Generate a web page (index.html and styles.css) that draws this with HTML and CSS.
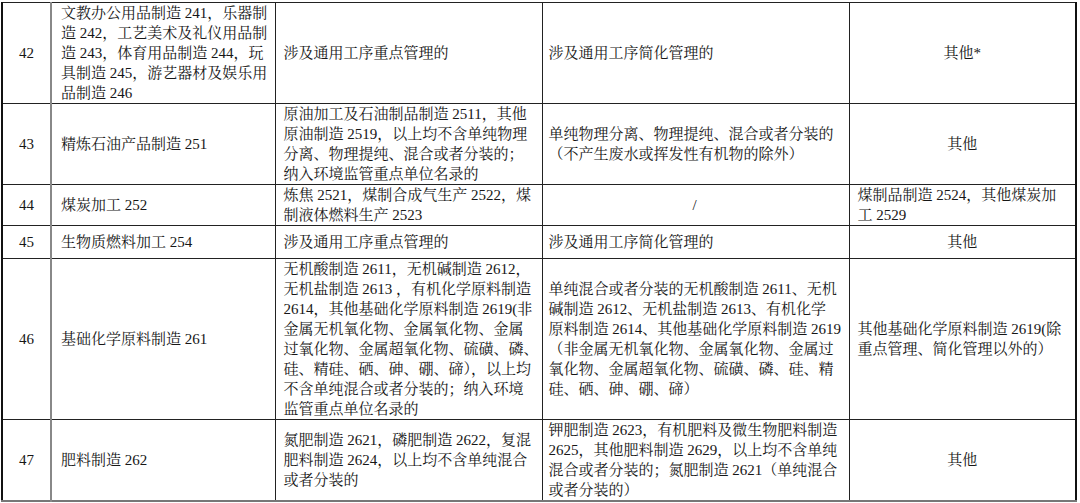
FILE: index.html
```html
<!DOCTYPE html>
<html lang="zh-CN">
<head>
<meta charset="utf-8">
<link rel="stylesheet" href="styles.css">
</head>
<body>
<table class="sheet">
  <colgroup>
    <col class="c-num">
    <col class="c-name">
    <col class="c-key">
    <col class="c-simple">
    <col class="c-other">
  </colgroup>
  <tbody>
    <tr class="r42">
      <td class="num">42</td>
      <td class="name">文教办公用品制造 241，乐器制<br>造 242，工艺美术及礼仪用品制<br>造 243，体育用品制造 244，玩<br>具制造 245，游艺器材及娱乐用<br>品制造 246</td>
      <td class="key">涉及通用工序重点管理的</td>
      <td class="simple">涉及通用工序简化管理的</td>
      <td class="other center">其他*</td>
    </tr>
    <tr class="r43">
      <td class="num">43</td>
      <td class="name">精炼石油产品制造 251</td>
      <td class="key">原油加工及石油制品制造 2511，其他<br>原油制造 2519，以上均不含单纯物理<br>分离、物理提纯、混合或者分装的；<br>纳入环境监管重点单位名录的</td>
      <td class="simple">单纯物理分离、物理提纯、混合或者分装的<br>（不产生废水或挥发性有机物的除外）</td>
      <td class="other center">其他</td>
    </tr>
    <tr class="r44">
      <td class="num">44</td>
      <td class="name">煤炭加工 252</td>
      <td class="key">炼焦 2521，煤制合成气生产 2522，煤<br>制液体燃料生产 2523</td>
      <td class="simple center">/</td>
      <td class="other">煤制品制造 2524，其他煤炭加<br>工 2529</td>
    </tr>
    <tr class="r45">
      <td class="num">45</td>
      <td class="name">生物质燃料加工 254</td>
      <td class="key">涉及通用工序重点管理的</td>
      <td class="simple">涉及通用工序简化管理的</td>
      <td class="other center">其他</td>
    </tr>
    <tr class="r46">
      <td class="num">46</td>
      <td class="name">基础化学原料制造 261</td>
      <td class="key">无机酸制造 2611，无机碱制造 2612，<br>无机盐制造 2613 ，有机化学原料制造<br>2614，其他基础化学原料制造 2619(非<br>金属无机氧化物、金属氧化物、金属<br>过氧化物、金属超氧化物、硫磺、磷、<br>硅、精硅、硒、砷、硼、碲），以上均<br>不含单纯混合或者分装的；纳入环境<br>监管重点单位名录的</td>
      <td class="simple">单纯混合或者分装的无机酸制造 2611、无机<br>碱制造 2612、无机盐制造 2613、有机化学<br>原料制造 2614、其他基础化学原料制造 2619<br>（非金属无机氧化物、金属氧化物、金属过<br>氧化物、金属超氧化物、硫磺、磷、硅、精<br>硅、硒、砷、硼、碲）</td>
      <td class="other">其他基础化学原料制造 2619(除<br>重点管理、简化管理以外的）</td>
    </tr>
    <tr class="r47">
      <td class="num">47</td>
      <td class="name">肥料制造 262</td>
      <td class="key">氮肥制造 2621，磷肥制造 2622，复混<br>肥料制造 2624，以上均不含单纯混合<br>或者分装的</td>
      <td class="simple">钾肥制造 2623，有机肥料及微生物肥料制造<br>2625，其他肥料制造 2629，以上均不含单纯<br>混合或者分装的；氮肥制造 2621（单纯混合<br>或者分装的）</td>
      <td class="other center">其他</td>
    </tr>
  </tbody>
</table>
</body>
</html>
```
FILE: styles.css
```css
html, body {
  margin: 0;
  padding: 0;
  background: #ffffff;
}

body {
  padding: 2px 0 0 1px;
}

.sheet {
  border-collapse: collapse;
  table-layout: fixed;
  width: 1074px;
  font-family: "Liberation Serif", "Noto Serif CJK SC", "Noto Sans CJK SC", serif;
  font-size: 15px;
  line-height: 20px;
  color: #161616;
  border-left: 2px solid #111;
  border-right: 2px solid #111;
  border-top: 1px solid #222;
  border-bottom: 2px solid #777;
}

.c-num { width: 49px; }
.c-name { width: 224px; }
.c-key { width: 267px; }
.c-simple { width: 307px; }
.c-other { width: 227px; }

.sheet td {
  border: 1px solid #222;
  padding: 0 8px;
  vertical-align: middle;
  white-space: nowrap;
  overflow: hidden;
}

.sheet td.num {
  text-align: center;
  padding: 0;
  border-right: 2px solid #888;
}

.sheet td.name {
  padding-left: 9px;
}

.sheet td.simple {
  padding-left: 6px;
}

.sheet td.center {
  text-align: center;
}

.r42 td { height: 100px; }
.r43 td { height: 80px; }
.r44 td { height: 40px; }
.r45 td { height: 32px; }
.r46 td { height: 159px; }
.r47 td { height: 80px; }
```
